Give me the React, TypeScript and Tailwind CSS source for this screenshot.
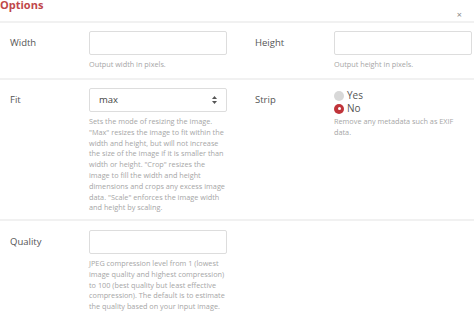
import { ReactNode } from 'react'

const FONT = { fontFamily: '"Open Sans", "Liberation Sans", sans-serif' }

function Field({ label, children, help }: { label: string; children: ReactNode; help?: ReactNode }) {
  return (
    <div className="flex w-[227px]">
      <div className="w-[89px] shrink-0 pl-[10px] h-[24px] flex items-center text-[9.5px] text-[#555]">{label}</div>
      <div className="w-[138px]">
        {children}
        {help && <p className="mt-[4px] text-[7.3px] leading-[10.8px] text-[#a6a6a6]">{help}</p>}
      </div>
    </div>
  )
}

function TextInput() {
  return <div className="h-[24px] w-[138px] border border-[#ddd] rounded-[2px] bg-white" />
}

function Radio({ checked, label }: { checked?: boolean; label: string }) {
  return (
    <div className="flex items-center gap-[3px] h-[13px] shrink-0 text-[10px] text-[#555]">
      {checked ? (
        <span className="w-[10px] h-[10px] rounded-full bg-[#c0343a] flex items-center justify-center">
          <span className="w-[3px] h-[3px] rounded-full bg-white" />
        </span>
      ) : (
        <span className="w-[10px] h-[10px] rounded-full bg-[#d8d8d8]" />
      )}
      {label}
    </div>
  )
}

export default function App() {
  return (
    <div className="w-[474px] h-[312px] bg-white overflow-hidden" style={FONT}>
      <div className="h-[23px] flex items-start justify-between border-b-2 border-[#f1f1f1]">
        <h2 className="text-[11px] font-bold text-[#c0474a] leading-[11px] -mt-[1px]">Options</h2>
        <span className="mt-[10px] mr-[12px] text-[9px] leading-[9px] text-[#888]">×</span>
      </div>

      <div className="flex gap-[18px] pt-[8px] h-[57px] border-b-2 border-[#f1f1f1]">
        <Field label="Width" help="Output width in pixels.">
          <TextInput />
        </Field>
        <Field label="Height" help="Output height in pixels.">
          <TextInput />
        </Field>
      </div>

      <div className="flex gap-[18px] pt-[8px] h-[141px] border-b-2 border-[#f1f1f1]">
        <Field
          label="Fit"
          help={'Sets the mode of resizing the image. "Max" resizes the image to fit within the width and height, but will not increase the size of the image if it is smaller than width or height. "Crop" resizes the image to fill the width and height dimensions and crops any excess image data. "Scale" enforces the image width and height by scaling.'}
        >
          <div className="h-[24px] w-[138px] border border-[#ddd] rounded-[2px] bg-white flex items-center justify-between pl-[9px] pr-[9px] text-[9.5px] text-[#444]">
            <span>max</span>
            <svg width="5" height="8" viewBox="0 0 5 8" fill="#555">
              <path d="M2.5 0 L5 3 H0 Z" />
              <path d="M2.5 8 L5 5 H0 Z" />
            </svg>
          </div>
        </Field>
        <Field label="Strip" help="Remove any metadata such as EXIF data.">
          <div className="pt-[1px] h-[24px] flex flex-col">
            <Radio label="Yes" />
            <Radio checked label="No" />
          </div>
        </Field>
      </div>

      <div className="flex gap-[18px] pt-[9px]">
        <Field
          label="Quality"
          help="JPEG compression level from 1 (lowest image quality and highest compression) to 100 (best quality but least effective compression). The default is to estimate the quality based on your input image."
        >
          <TextInput />
        </Field>
      </div>
    </div>
  )
}
